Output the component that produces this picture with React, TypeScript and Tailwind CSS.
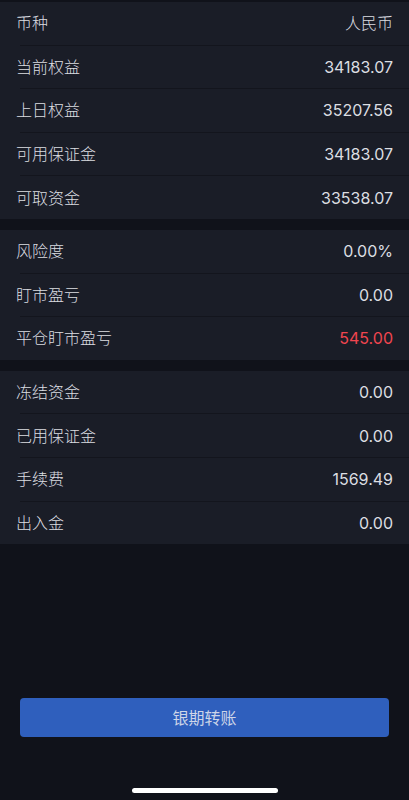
import React from 'react';

interface Row {
  label: string;
  value: string;
  red?: boolean;
}

const sections: Row[][] = [
  [
    { label: '币种', value: '人民币' },
    { label: '当前权益', value: '34183.07' },
    { label: '上日权益', value: '35207.56' },
    { label: '可用保证金', value: '34183.07' },
    { label: '可取资金', value: '33538.07' },
  ],
  [
    { label: '风险度', value: '0.00%' },
    { label: '盯市盈亏', value: '0.00' },
    { label: '平仓盯市盈亏', value: '545.00', red: true },
  ],
  [
    { label: '冻结资金', value: '0.00' },
    { label: '已用保证金', value: '0.00' },
    { label: '手续费', value: '1569.49' },
    { label: '出入金', value: '0.00' },
  ],
];

const App: React.FC = () => {
  return (
    <div
      className="w-[409px] h-[800px] bg-[#10121a] flex flex-col pt-[2px] overflow-hidden"
      style={{ fontFamily: 'Inter, "Noto Sans CJK SC", sans-serif' }}
    >
      <div className="flex flex-col gap-[11px]">
        {sections.map((rows, si) => (
          <div key={si} className="bg-[#1a1d27]">
            {rows.map((row, ri) => {
              // chinese text reads thinner in the reference than the digits
              const isText = /[^\d.%]/.test(row.value);
              return (
                <div key={row.label}>
                  <div className="h-[42.6px] flex items-center justify-between px-4">
                    <span className="text-[16px] font-light text-[#dcdee2]">{row.label}</span>
                    <span
                      className={`text-[16px] ${isText ? 'font-light' : 'font-normal'} ${
                        row.red ? 'text-[#f0454f]' : 'text-[#dcdee2]'
                      }`}
                    >
                      {row.value}
                    </span>
                  </div>
                  {ri < rows.length - 1 && <div className="ml-5 h-px bg-[#13151d]" />}
                </div>
              );
            })}
          </div>
        ))}
      </div>

      <div className="flex-1" />

      <div className="px-5 pb-[51px]">
        <button className="w-full h-[39px] rounded-[4px] bg-[#2f5fbd] text-[16px] font-normal text-[#cdd5e8]">
          银期转账
        </button>
      </div>

      <div className="flex justify-center pb-[7px]">
        <div className="w-[146px] h-[5px] rounded-full bg-white" />
      </div>
    </div>
  );
};

export default App;
